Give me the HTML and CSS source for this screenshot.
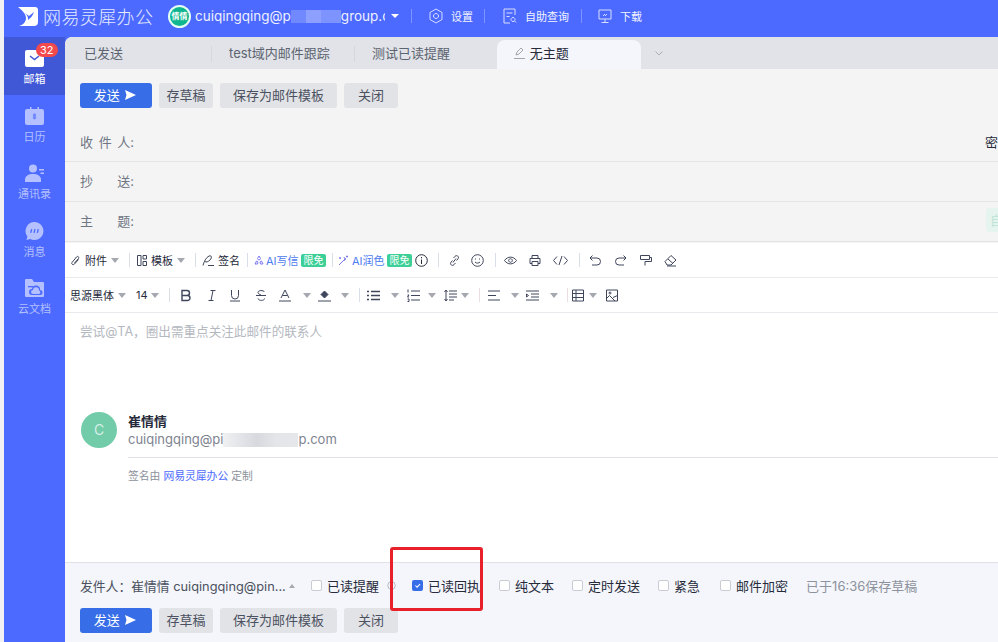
FILE: index.html
```html
<!DOCTYPE html>
<html>
<head>
    <title>网易灵犀办公</title>
    <meta name="viewport" content="width=device-width, initial-scale=1.0">
    <link rel="stylesheet" href="styles.css">
</head>
<body>
    <div class="app">
        <!-- top bar -->
        <div class="topbar">
            <svg class="logo" viewBox="0 0 20 19"><path d="M0 0h17a3 3 0 0 1 3 3v12a4 4 0 0 1-4 4H1c4-1 7-4 7-8C8 7 4 3 0 0z" fill="#fff"/><path d="M7 6l4 3 5-4c-1 3-3 6-6 8 .5-2.500-1-5-3-7z" fill="#4c6aff"/></svg>
            <span class="brand">网易灵犀办公</span>
            <span class="avatar">情情</span>
            <span class="account">cuiqingqing@p<i class="blur-top"></i>group.com</span>
            <span class="top-caret"></span>
            <span class="top-sep sep-a"></span>
            <svg class="top-icon ic-a" viewBox="0 0 14 16"><path d="M7 1l6 3.500v7L7 15l-6-3.500v-7z M7 5.500a2.500 2.500 0 1 0 .01 0z"/></svg>
            <span class="top-link tl-a">设置</span>
            <span class="top-sep sep-b"></span>
            <svg class="top-icon ic-b" viewBox="0 0 14 16"><path d="M12 7V1H1v14h6 M3.500 5h6 M3.500 8.500h3 M10 9.500a2 2 0 1 0 .01 0z M11.500 13l1.500 1.500"/></svg>
            <span class="top-link tl-b">自助查询</span>
            <span class="top-sep sep-c"></span>
            <svg class="top-icon ic-c" viewBox="0 0 14 16"><path d="M1 2h12v9H1z M7 11v3 M3.500 14.500h7 M5 8l2-2 M7 8l2-2"/></svg>
            <span class="top-link tl-c">下载</span>
        </div>

        <div class="main">
            <!-- side navigation -->
            <div class="sidebar">
                <div class="nav-item active">
                    <span class="badge">32</span>
                    <svg class="nav-icon" viewBox="0 0 19 18"><path d="M2 1h15a2 2 0 0 1 2 2v13a2 2 0 0 1-2 2H2a2 2 0 0 1-2-2V3a2 2 0 0 1 2-2z" fill="#fff"/><path d="M5 7l4.500 3.500L14 7" fill="none" stroke="#4058d6" stroke-width="1.500"/></svg>
                    <span>邮箱</span>
                </div>
                <div class="nav-item">
                    <svg class="nav-icon" viewBox="0 0 19 18"><path d="M2 2h3V0h1.500v2h6V0H14v2h3a2 2 0 0 1 2 2v12a2 2 0 0 1-2 2H2a2 2 0 0 1-2-2V4a2 2 0 0 1 2-2z" fill="#b4c0ff"/><path d="M9.500 6.500a1.500 1.500 0 0 1 1 2.700 1.700 1.700 0 1 1-2 0 1.500 1.500 0 0 1 1-2.700z" fill="#6f88ff"/></svg>
                    <span>日历</span>
                </div>
                <div class="nav-item">
                    <svg class="nav-icon" viewBox="0 0 19 18"><circle cx="8" cy="4.500" r="4" fill="#b4c0ff"/><path d="M0 18v-2.500C0 12 3.500 10 8 10s8 2 8 5.500V18z" fill="#b4c0ff"/><path d="M14 5h5v1.500h-5z M15.500 8.500H19V10h-3.500z" fill="#b4c0ff"/></svg>
                    <span>通讯录</span>
                </div>
                <div class="nav-item">
                    <svg class="nav-icon" viewBox="0 0 19 19"><path d="M9.500 0a9.500 9.500 0 1 1-4.500 17.900L1 19l1-3.800A9.500 9.500 0 0 1 9.500 0z" fill="#b4c0ff"/><path d="M5.500 11.500l1-4 M9 11.500l1-4 M12.500 11.500l1-4" stroke="#4c6aff" stroke-width="1.400" fill="none"/></svg>
                    <span>消息</span>
                </div>
                <div class="nav-item">
                    <svg class="nav-icon" viewBox="0 0 19 18"><path d="M1 0h6l2 3h9a1 1 0 0 1 1 1v13a1 1 0 0 1-1 1H1a1 1 0 0 1-1-1V1a1 1 0 0 1 1-1z" fill="#b4c0ff"/><path d="M7 16a3 3 0 0 1 0-6 4 4 0 0 1 8 1 2.500 2.500 0 0 1 0 5z" fill="#4c6aff"/><path d="M8 15a2 2 0 0 1 0-4 3 3 0 0 1 6 .5 1.800 1.800 0 0 1 0 3.500z" fill="#b4c0ff"/><path d="M3 7h5v1.300H3z" fill="#4c6aff"/></svg>
                    <span>云文档</span>
                </div>
            </div>

            <div class="content">
                <!-- tabs -->
                <div class="tabs">
                    <div class="tab first">已发送</div>
                    <div class="tab">test域内邮件跟踪</div>
                    <div class="tab">测试已读提醒</div>
                    <div class="tab current">
                        <svg class="tab-pen" viewBox="0 0 11 12"><path d="M2 8l1-3 4-4 2 2-4 4z M0 11.500h11"/></svg>
                        无主题
                    </div>
                    <svg class="tab-more" viewBox="0 0 8 5"><path d="M.5.500L4 4 7.500.500"/></svg>
                </div>

                <!-- send / draft buttons -->
                <div class="actions top-actions">
                    <button class="btn send">发送 <svg class="send-arrow" viewBox="0 0 11 10"><path d="M0 0l11 5-11 5 1.500-5z"/></svg></button>
                    <button class="btn">存草稿</button>
                    <button class="btn wide">保存为邮件模板</button>
                    <button class="btn">关闭</button>
                </div>

                <div class="field first-field">
                    <span class="field-label"><span>收</span><span>件</span><span>人:</span></span>
                    <span class="bcc">密送</span>
                </div>
                <div class="field">
                    <span class="field-label"><span>抄</span><span>送:</span></span>
                </div>
                <div class="field">
                    <span class="field-label"><span>主</span><span>题:</span></span>
                    <span class="chip">自</span>
                </div>

                <!-- editor toolbar, first row -->
                <div class="toolbar row-one">
                    <svg class="ti w10" viewBox="0 0 10 12"><path d="M8.500 5L4.500 9.500C3 11 1 9.500 2 8l4.500-5.500C7.500 1 9.500 2.500 8.500 4L4.500 8.500" /></svg>
                    <span class="tl m5">附件</span><span class="caret m4"></span>
                    <span class="tsep m10"></span>
                    <svg class="ti w10 m7" viewBox="0 0 10 12"><path d="M.5 1h3.500v10H.500z M6 1h3.500v3.500H6z M6 7h3.500v4H6z"/></svg>
                    <span class="tl m4">模板</span><span class="caret m4"></span>
                    <span class="tsep m10"></span>
                    <svg class="ti w12 m6" viewBox="0 0 12 12"><path d="M1 11c1-4 3-8 6-9.500 3-1 3 2 1 4C6 7.500 4 8 3 7 M6 11h6"/></svg>
                    <span class="tl m4">签名</span>
                    <span class="tsep m7"></span>
                    <svg class="ti w10 m6 purple" viewBox="0 0 10 11"><path d="M5 1l1.500 2.500-1 1.500h-1L3.500 3.500z M1 9l1.500-3 1.500 1-.5 2z M9 9L7.500 6 6 7l.5 2z"/></svg>
                    <span class="tl ai m2">AI写信</span>
                    <span class="free m4">限免</span>
                    <span class="tsep m6"></span>
                    <svg class="ti w11 m5 purple" viewBox="0 0 11 11"><path d="M1 10l6-6 M6 2l.5 1.500L8 4l-1.500.5L6 6 M9 .5v2 M8 1.500h2 M1 3h2 M2 2v2"/></svg>
                    <span class="tl ai m3">AI润色</span>
                    <span class="free m4">限免</span>
                    <svg class="ti w13 m3 dark" viewBox="0 0 13 13"><circle cx="6.500" cy="6.500" r="5.800"/><path d="M6.500 5.500v4.500 M6.500 3v1.300"/></svg>
                    <span class="tsep m10"></span>
                    <svg class="ti w11 m10" viewBox="0 0 11 12"><path d="M4.500 3.500L6 1.800c2-1.800 4.500.5 3 2.500L7.500 6 M6.500 8.500L5 10.200c-2 1.800-4.500-.5-3-2.500L3.500 6 M4 8l3-4"/></svg>
                    <svg class="ti w13 m11" viewBox="0 0 13 13"><circle cx="6.500" cy="6.500" r="5.800"/><path d="M4 8c1.500 1.500 3.500 1.500 5 0 M4.500 4.500v1 M8.500 4.500v1"/></svg>
                    <span class="tsep m11"></span>
                    <svg class="ti w13 m8" viewBox="0 0 13 10"><path d="M.5 5C3.500.5 9.500.5 12.500 5c-3 4.500-9 4.500-12 0z M6.500 3.200a1.800 1.800 0 1 0 .01 0z"/></svg>
                    <svg class="ti w12 m12" viewBox="0 0 12 12"><path d="M3 4V1h6v3 M3 9H1V4h10v5H9 M3 7h6v4H3z"/></svg>
                    <svg class="ti w15 m12" viewBox="0 0 15 10"><path d="M4 1L.5 5 4 9 M11 1l3.500 4L11 9 M9 .5l-3 9"/></svg>
                    <span class="tsep m11"></span>
                    <svg class="ti w12 m9" viewBox="0 0 12 11"><path d="M3.500 .5L1 3l2.500 2.500 M1 3h7a3.500 3.500 0 0 1 0 7H3"/></svg>
                    <svg class="ti w12 m14" viewBox="0 0 12 11"><path d="M8.500 .5L11 3 8.500 5.500 M11 3H4a3.500 3.500 0 0 0 0 7h5"/></svg>
                    <svg class="ti w12 m13" viewBox="0 0 12 12"><path d="M.5 1h9v4h-9z M9.500 3h2v4H5v4"/></svg>
                    <svg class="ti w13 m12" viewBox="0 0 13 12"><path d="M1 7l6-6 5 4.500-5 5H3z M4 4.500L9 9 M3 11.500h9"/></svg>
                </div>

                <!-- editor toolbar, second row -->
                <div class="toolbar row-two">
                    <span class="tl">思源黑体</span><span class="caret m4"></span>
                    <span class="tl m10 size">14</span><span class="caret m4"></span>
                    <span class="tsep m10"></span>
                    <svg class="ti w10 m11 heavy" viewBox="0 0 10 11"><path d="M1 .5h5a2.500 2.500 0 0 1 0 5H1z M1 5.500h5.500a2.500 2.500 0 0 1 0 5H1z"/></svg>
                    <svg class="ti w8 m17" viewBox="0 0 8 11"><path d="M2.500.5h5 M.5 10.500h5 M5 .5l-2 10"/></svg>
                    <svg class="ti w10 m14" viewBox="0 0 10 12"><path d="M1.500 .5V6a3.500 3.500 0 0 0 7 0V.5 M0 11.500h10"/></svg>
                    <svg class="ti w10 m16" viewBox="0 0 10 12"><path d="M8.500 2.500C7.500.5 2 .5 2 3c0 1.500 2 2 3 2.500 M0 6h10 M2 9c.5 2.500 6.500 2.500 6.500 0"/></svg>
                    <svg class="ti w12 m13" viewBox="0 0 12 12"><path d="M2 8.500L6 .5l4 8 M3.500 6h5 M0 11.500h12"/></svg>
                    <span class="caret m12"></span>
                    <svg class="ti w13 m7" viewBox="0 0 13 12"><path d="M3 5l3.500-3.500L10 5l-3.500 3.500z" fill="#3f465c"/><path d="M0 11.500h13"/></svg>
                    <span class="caret m10"></span>
                    <span class="tsep m10"></span>
                    <svg class="ti w13 m7 heavy" viewBox="0 0 13 11"><path d="M0 1.500h2 M4 1.500h9 M0 5.500h2 M4 5.500h9 M0 9.500h2 M4 9.500h9"/></svg>
                    <span class="caret m11"></span>
                    <svg class="ti w13 m8" viewBox="0 0 13 13"><path d="M4 2h9 M4 6.500h9 M4 11h9 M1 .5v3 M.5 6h1.500L.5 8h1.500 M.5 10h1.500v2.500H.5"/></svg>
                    <span class="caret m8"></span>
                    <svg class="ti w13 m8" viewBox="0 0 13 13"><path d="M2 1v11 M.5 3L2 1l1.500 2 M.5 10L2 12l1.500-2 M5 2h8 M5 5h8 M5 8h8 M5 11h5"/></svg>
                    <span class="caret m4"></span>
                    <span class="tsep pink m10"></span>
                    <svg class="ti w13 m8" viewBox="0 0 13 11"><path d="M0 1h12 M0 5.500h8 M0 10h12"/></svg>
                    <span class="caret m10"></span>
                    <svg class="ti w13 m7" viewBox="0 0 13 11"><path d="M0 1h13 M5 4h8 M5 7h8 M0 10h13 M.5 4l2 1.500-2 1.500z"/></svg>
                    <span class="caret m11"></span>
                    <span class="tsep pink m9"></span>
                    <svg class="ti w12 m4" viewBox="0 0 12 12"><path d="M.5 .5h11v11H.500z M.5 4h11 M.5 8h11 M4 .5v11"/></svg>
                    <span class="caret m5"></span>
                    <svg class="ti w12 m9" viewBox="0 0 12 12"><path d="M.5 .5h11v11H.500z M.5 9l3-3 5.500 5.500 M7 8l4.500-2"/><circle cx="4" cy="3.500" r="1"/></svg>
                </div>

                <!-- message body -->
                <div class="editor">
                    <p class="hint">尝试@TA&#xFF0C;圈出需重点关注此邮件的联系人</p>
                    <div class="signature">
                        <span class="sig-avatar">C</span>
                        <div class="sig-info">
                            <div class="sig-name">崔情情</div>
                            <div class="sig-mail">cuiqingqing@pi<i class="blur-sig"></i>p.com</div>
                        </div>
                    </div>
                    <div class="sig-line"></div>
                    <div class="sig-note">签名由 <span class="sig-link">网易灵犀办公</span> 定制</div>
                </div>

                <!-- bottom options -->
                <div class="footer">
                    <div class="options">
                        <span class="sender">发件人&#xFF1A;崔情情 cuiqingqing@pin...</span>
                        <span class="up-caret"></span>
                        <span class="box box-a"></span><span class="opt">已读提醒</span>
                        <svg class="opt-info" viewBox="0 0 9 9"><circle cx="4.500" cy="4.500" r="3.800"/><path d="M4.500 3.500v3"/></svg>
                        <span class="box box-b checked"><svg viewBox="0 0 13 13"><path d="M4 6.500l2 2 3.500-3.500"/></svg></span><span class="opt">已读回执</span>
                        <span class="box box-c"></span><span class="opt">纯文本</span>
                        <span class="box box-d"></span><span class="opt">定时发送</span>
                        <span class="box box-e"></span><span class="opt">紧急</span>
                        <span class="box box-f"></span><span class="opt">邮件加密</span>
                        <span class="saved">已于16:36保存草稿</span>
                    </div>
                    <div class="actions">
                        <button class="btn send">发送 <svg class="send-arrow" viewBox="0 0 11 10"><path d="M0 0l11 5-11 5 1.500-5z"/></svg></button>
                        <button class="btn">存草稿</button>
                        <button class="btn wide">保存为邮件模板</button>
                        <button class="btn">关闭</button>
                    </div>
                    <div class="red-mark"></div>
                </div>
            </div>
        </div>
    </div>
</body>
</html>
```

FILE: styles.css
```css
*{
    margin:0;
    padding:0;
    box-sizing:border-box;
}

html,body{
    width:100%;
    height:100%;
    overflow:hidden;
}

body{
    background-color:#f1f1f3;
    font-family:"Inter","Noto Sans CJK SC","Noto Sans",sans-serif;
    font-size:13px;
    color:#3f465c;
}

.app{
    height:100%;
    margin-left:4px;
    display:flex;
    flex-direction:column;
    background-color:#4c6aff;
}

/* top bar */

.topbar{
    height:37px;
    padding-bottom:5px;
    flex-shrink:0;
    display:flex;
    align-items:center;
    color:white;
}

.logo{
    width:20px;
    height:19px;
    margin-left:14px;
}

.brand{
    margin-left:5px;
    font-size:18px;
    letter-spacing:.4px;
    font-weight:300;
    color:#e6eaff;
    width:111px;
    white-space:nowrap;
}

.avatar{
    width:23px;
    height:23px;
    margin-left:14px;
    border-radius:50%;
    border:2px solid #e4fff6;
    background-color:#0fb58e;
    font-size:8px;
    line-height:19px;
    text-align:center;
    white-space:nowrap;
    overflow:hidden;
    font-weight:bold;
}

.account{
    width:190px;
    margin-left:4px;
    overflow:hidden;
    white-space:nowrap;
    font-size:13.500px;
    color:#eef0ff;
}

.blur-top{
    display:inline-block;
    width:50px;
    height:13px;
    vertical-align:-2px;
    background:linear-gradient(to right,#7189ff 0,#7189ff 30%,#8da0ff 30%,#8da0ff 60%,#7d93ff 60%,#7d93ff 100%);
}

.top-caret{
    margin-left:6px;
    border:4px solid transparent;
    border-top:4px solid white;
    border-bottom:0;
}

.top-sep{
    width:1px;
    height:14px;
    background-color:#7b92ff;
}

.sep-a{ margin-left:12px; }
.sep-b{ margin-left:11px; }
.sep-c{ margin-left:12px; }

.top-icon{
    width:14px;
    height:16px;
    fill:none;
    stroke:#d7deff;
    stroke-width:1;
}

.ic-a{ margin-left:17px; }
.ic-b{ margin-left:18px; }
.ic-c{ margin-left:16px; }

.top-link{
    font-size:11px;
    color:#f2f4ff;
    white-space:nowrap;
}

.tl-a{ margin-left:8px; }
.tl-b{ margin-left:8px; }
.tl-c{ margin-left:8px; }

.main{
    flex:1;
    display:flex;
    min-height:0;
}

/* side navigation */

.sidebar{
    width:61px;
    flex-shrink:0;
}

.nav-item{
    position:relative;
    height:57.500px;
    padding-top:12px;
    display:flex;
    flex-direction:column;
    align-items:center;
    font-size:11px;
    line-height:14px;
    color:#b4c0ff;
}

.nav-item.active{
    background-color:#4058d6;
    color:white;
}

.nav-icon{
    width:19px;
    height:18px;
    margin-bottom:5px;
}

.badge{
    position:absolute;
    top:6px;
    left:32px;
    height:14px;
    padding:0 4px;
    border-radius:7px;
    background-color:#f2494d;
    color:white;
    font-size:11px;
    line-height:14px;
}

/* tabs */

.content{
    flex:1;
    min-width:0;
    position:relative;
    display:flex;
    flex-direction:column;
    background-color:#f4f4f4;
    border-top-left-radius:7px;
    overflow:hidden;
}

.tabs{
    height:32px;
    flex-shrink:0;
    display:flex;
    align-items:center;
    background-color:#e1e3e8;
}

.tab{
    position:relative;
    width:143px;
    height:32px;
    padding-left:18px;
    line-height:32px;
    color:#5c6470;
    white-space:nowrap;
}

.tab.first{
    padding-left:19px;
    width:146px;
}

.tab + .tab::before{
    content:"";
    position:absolute;
    left:0;
    top:9px;
    width:1px;
    height:16px;
    background-color:#d5d7dd;
}

.tab.current{
    width:144px;
    height:29px;
    margin-top:3px;
    padding-left:17px;
    line-height:27px;
    background-color:#f4f6fb;
    border-radius:8px 8px 0 0;
    color:#262a3a;
}

.tab.current::before{
    display:none;
}

.tab-pen{
    width:11px;
    height:12px;
    margin-right:1px;
    vertical-align:-1px;
    fill:none;
    stroke:#8d929c;
    stroke-width:.8;
}

.tab-more{
    width:8px;
    height:5px;
    margin-left:14px;
    fill:none;
    stroke:#a9adb6;
    stroke-width:1;
}

/* buttons */

.actions{
    display:flex;
    gap:7px;
    padding-left:15px;
}

.top-actions{
    padding-top:14px;
    padding-bottom:14px;
}

.btn{
    width:54px;
    height:25px;
    padding-bottom:2px;
    border:0;
    border-radius:3px;
    background-color:#e2e3e7;
    font-family:inherit;
    font-size:13px;
    color:#4b5160;
}

.btn.wide{
    width:117px;
}

.btn.send{
    width:72px;
    padding-right:2px;
    background-color:#376ee8;
    color:white;
}

.send-arrow{
    width:11px;
    height:10px;
    margin-left:2px;
    fill:white;
}

/* address fields */

.field{
    height:40px;
    flex-shrink:0;
    display:flex;
    align-items:center;
    justify-content:space-between;
    padding-left:15px;
    padding-bottom:3px;
    border-bottom:1px solid #e4e4e6;
    overflow:hidden;
}

.first-field{
    padding-bottom:1px;
}

.field-label{
    width:54px;
    display:flex;
    justify-content:space-between;
    color:#6f7583;
}

.bcc{
    width:26px;
    margin-right:-13px;
    white-space:nowrap;
    color:#262a3a;
    font-size:13px;
}

.chip{
    width:24px;
    height:24px;
    margin-right:-12px;
    border-radius:4px;
    background-color:#e5f4ef;
    color:#bfe4d8;
    line-height:24px;
    padding-left:4px;
}

/* editor toolbar */

.toolbar{
    height:35px;
    flex-shrink:0;
    display:flex;
    align-items:center;
    padding-left:5px;
    background-color:white;
    border-bottom:1px solid #e9eaed;
}

.row-one{
    margin-top:1px;
}

.ti{
    height:13px;
    flex-shrink:0;
    fill:none;
    stroke:#3f465c;
    stroke-width:1;
}

.ti.purple{ stroke:#7a78f0; }
.ti.dark{ stroke:#262a3a; }
.ti.heavy{ stroke-width:1.400; }

.w8{ width:8px; }
.w10{ width:10px; }
.w11{ width:11px; }
.w12{ width:12px; }
.w13{ width:13px; }
.w15{ width:15px; }

.m2{ margin-left:2px; }
.m3{ margin-left:3px; }
.m4{ margin-left:4px; }
.m5{ margin-left:5px; }
.m6{ margin-left:6px; }
.m7{ margin-left:7px; }
.m8{ margin-left:8px; }
.m9{ margin-left:9px; }
.m10{ margin-left:10px; }
.m11{ margin-left:11px; }
.m12{ margin-left:12px; }
.m13{ margin-left:13px; }
.m14{ margin-left:14px; }
.m15{ margin-left:15px; }
.m16{ margin-left:16px; }
.m17{ margin-left:17px; }

.tl{
    font-size:11px;
    color:#262a3a;
    white-space:nowrap;
}

.tl.ai{
    width:31px;
    color:#4c7bf0;
}

.tl.size{
    width:11px;
}

.row-two .tl:first-child{
    width:44px;
}

.caret{
    flex-shrink:0;
    border:4px solid transparent;
    border-top:5px solid #a5a8b0;
    border-bottom:0;
}

.tsep{
    width:1px;
    height:14px;
    flex-shrink:0;
    background-color:#d9dee8;
}

.tsep.pink{
    background-color:#ecdde2;
}

.free{
    width:25px;
    height:13px;
    border-radius:2px;
    background-color:#3ccf97;
    color:white;
    font-size:10px;
    line-height:13px;
    text-align:center;
}

/* message body */

.editor{
    flex:1;
    min-height:0;
    background-color:white;
    padding-left:15px;
}

.hint{
    padding-top:10px;
    font-size:12.600px;
    line-height:18px;
    color:#b4b8c0;
}

.signature{
    display:flex;
    align-items:center;
    gap:11px;
    margin-top:71px;
    margin-left:1px;
}

.sig-avatar{
    width:36px;
    height:36px;
    border-radius:50%;
    background-color:#72cba9;
    color:#d5efe6;
    font-size:14px;
    line-height:36px;
    text-align:center;
}

.sig-name{
    line-height:18px;
    font-weight:bold;
    color:#262a3a;
}

.sig-mail{
    line-height:18px;
    color:#7d8390;
    white-space:nowrap;
}

.blur-sig{
    display:inline-block;
    width:75px;
    height:14px;
    vertical-align:-3px;
    background:linear-gradient(to right,#f0f1f3 0,#e0e1e6 30%,#d8d9de 45%,#e4e5e9 70%,#e6e7ea 100%);
}

.sig-line{
    height:1px;
    margin-left:48px;
    margin-top:9px;
    background-color:#e1e3e8;
}

.sig-note{
    margin-left:48px;
    margin-top:11px;
    font-size:10.800px;
    line-height:16px;
    color:#8d929c;
}

.sig-link{
    color:#4c6aff;
}

/* bottom options */

.footer{
    position:relative;
    height:80px;
    flex-shrink:0;
    background-color:#f4f6fb;
    border-top:1px solid #dfe1e6;
}

.options{
    height:45px;
    display:flex;
    align-items:center;
    padding-left:15px;
    white-space:nowrap;
}

.sender{
    width:205px;
    font-size:12.800px;
    color:#4b5160;
}

.up-caret{
    margin-left:4px;
    border:3.500px solid transparent;
    border-bottom:4px solid #a5a8b0;
    border-top:0;
}

.box{
    width:11px;
    height:11px;
    flex-shrink:0;
    border:1px solid #c9ccd3;
    border-radius:2px;
    background-color:white;
}

.box-a{ margin-left:16px; }
.box-b{ margin-left:16px; }
.box-c{ margin-left:19px; }
.box-d{ margin-left:18px; }
.box-e{ margin-left:18px; }
.box-f{ margin-left:20px; }

.box.checked{
    border:0;
    background-color:#376ee8;
}

.box.checked svg{
    display:block;
    fill:none;
    stroke:white;
    stroke-width:1.200;
}

.opt{
    margin-left:5px;
    color:#262a3a;
}

.opt-info{
    width:9px;
    height:9px;
    margin-left:8px;
    fill:none;
    stroke:#b4b8c0;
    stroke-width:1;
}

.saved{
    margin-left:18px;
    color:#8d929c;
}

.red-mark{
    position:absolute;
    left:325px;
    top:-16px;
    width:93px;
    height:64px;
    border:3px solid #e8202a;
    border-radius:3px;
}
```
